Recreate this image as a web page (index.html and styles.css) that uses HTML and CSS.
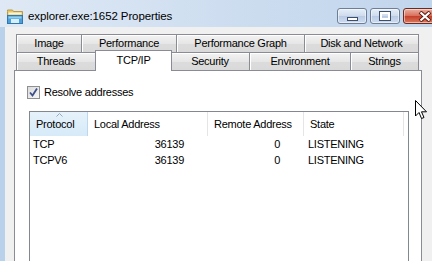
FILE: index.html
```html
<!DOCTYPE html>
<html lang="en">
<head>
    <meta charset="UTF-8">
    <title>explorer.exe:1652 Properties</title>
    <link rel="stylesheet" href="styles.css">
</head>
<body>
    <div class="window">
        <div class="titlebar">
            <svg class="app-icon" width="16" height="15" viewBox="0 0 16 15">
                <path d="M0.5 2.5 L0.5 1 L5.5 1 L6.5 2.5 L15.5 2.5 L15.5 14.5 L0.5 14.5 Z" fill="#e7c76c" stroke="#b99a42"/>
                <rect x="1.5" y="3.5" width="13" height="2" fill="#fff4c8"/>
                <rect x="0.5" y="6.5" width="15" height="8" fill="#4f9fd6" stroke="#2f77b0"/>
                <rect x="1.5" y="7.5" width="13" height="2" fill="#8fd0f0"/>
                <rect x="4" y="10" width="8" height="4" fill="#d8eef9"/>
            </svg>
            <span class="title">explorer.exe:1652 Properties</span>
            <div class="caption-buttons">
                <div class="cap-btn min"><span class="min-glyph"></span></div>
                <div class="cap-btn max"><span class="max-glyph"></span></div>
                <div class="cap-btn close">
                    <svg width="14" height="11" viewBox="0 0 14 11">
                        <path d="M2 1 L12 10 M12 1 L2 10" stroke="#5a1a10" stroke-width="4"/>
                        <path d="M2.5 1.5 L11.5 9.5 M11.5 1.5 L2.5 9.5" stroke="#fff" stroke-width="2.2"/>
                    </svg>
                </div>
            </div>
        </div>
        <div class="frame">
            <div class="client">
                <div class="tabs">
                    <div class="tab-row row-back">
                        <div class="tab">Image</div>
                        <div class="tab">Performance</div>
                        <div class="tab">Performance Graph</div>
                        <div class="tab">Disk and Network</div>
                    </div>
                    <div class="tab-row row-front">
                        <div class="tab">Threads</div>
                        <div class="tab selected">TCP/IP</div>
                        <div class="tab">Security</div>
                        <div class="tab">Environment</div>
                        <div class="tab">Strings</div>
                    </div>
                </div>
                <div class="panel">
                    <label class="check">
                        <span class="box">
                            <svg width="11" height="11" viewBox="0 0 11 11">
                                <path d="M2 5.5 L4.5 8.5 L9 1.5" fill="none" stroke="#3b4f8a" stroke-width="1.8"/>
                            </svg>
                        </span>
                        Resolve addresses
                    </label>
                    <div class="listview">
                        <div class="lv-header">
                            <div class="col c-proto sorted">
                                <svg class="sort-arrow" width="7" height="4" viewBox="0 0 7 4">
                                    <path d="M0.5 3.5 L3.5 0.5 L6.5 3.5" fill="none" stroke="#97a9bb"/>
                                </svg>
                                Protocol
                            </div>
                            <div class="col c-local">Local Address</div>
                            <div class="col c-remote">Remote Address</div>
                            <div class="col c-state">State</div>
                        </div>
                        <div class="lv-row">
                            <div class="cell c-proto">TCP</div>
                            <div class="cell c-local num">36139</div>
                            <div class="cell c-remote num">0</div>
                            <div class="cell c-state">LISTENING</div>
                        </div>
                        <div class="lv-row">
                            <div class="cell c-proto">TCPV6</div>
                            <div class="cell c-local num">36139</div>
                            <div class="cell c-remote num">0</div>
                            <div class="cell c-state">LISTENING</div>
                        </div>
                    </div>
                </div>
            </div>
        </div>
        <svg class="cursor" width="13" height="20" viewBox="0 0 13 20">
            <path d="M0.5 0.5 L0.5 16 L4 12.5 L6.5 18.5 L9 17.5 L6.5 11.8 L11.5 11.8 Z" fill="#fff" stroke="#000" stroke-linejoin="round"/>
        </svg>
    </div>
</body>
</html>
```

FILE: styles.css
```css
body {
    margin: 0;
    font-family: "Liberation Sans", Arial, sans-serif;
    font-size: 11px;
    letter-spacing: -0.25px;
    color: #000;
    overflow: hidden;
}
.window {
    position: relative;
    width: 432px;
    height: 261px;
    overflow: hidden;
    display: flex;
    flex-direction: column;
    background: #b9d1ea;
}
.titlebar {
    flex-shrink: 0;
    height: 19px;
    padding: 8px 0 0 7px;
    display: flex;
    align-items: flex-start;
    background: linear-gradient(to right, #dfe9f5, #cbdcef 60%, #c1d5ec);
}
.app-icon {
    margin-top: 1px;
    margin-right: 5px;
}
.title {
    font-size: 11.5px;
    letter-spacing: -0.1px;
    line-height: 16px;
}
.caption-buttons {
    margin-left: auto;
    margin-right: -14px;
    display: flex;
    gap: 3px;
}
.cap-btn {
    width: 28px;
    height: 14px;
    border: 1px solid #6d7e96;
    border-radius: 3px;
    display: flex;
    align-items: center;
    justify-content: center;
    background: linear-gradient(#e6eef8 0%, #cfdcee 48%, #b9cbe4 52%, #cfdcef 100%);
    box-shadow: inset 0 0 0 1px rgba(255, 255, 255, 0.5);
}
.cap-btn.close {
    width: 41px;
    border-color: #6e2a1f;
    background: linear-gradient(#eab0a2 0%, #d8705c 48%, #c6402a 52%, #d8785e 100%);
}
.min-glyph {
    width: 9px;
    height: 2px;
    margin-top: 6px;
    background: #fff;
    border: 1px solid #3d4f6a;
}
.max-glyph {
    width: 6px;
    height: 4px;
    border: 2px solid #fff;
    outline: 1px solid #3d4f6a;
}
.frame {
    flex: 1;
    min-height: 0;
    padding-left: 5px;
    display: flex;
}
.client {
    flex: 1;
    background: #f0f0f0;
    padding: 7px 0 0 9px;
}
.tabs {
    margin-left: 2px;
    width: 403px;
}
.tab-row {
    display: grid;
    height: 18px;
}
.row-back {
    grid-template-columns: 65px 95px 128px 115px;
}
.row-front {
    grid-template-columns: 79px 76px 78px 101px 69px;
}
.tab {
    border: 1px solid #898c95;
    border-right: none;
    border-bottom: none;
    background: linear-gradient(#f3f3f3, #e6e6e6 50%, #dcdcdc 51%, #d9d9d9);
    text-align: center;
    line-height: 17px;
    box-shadow: inset 1px 1px 0 #fff;
}
.tab:last-child {
    border-right: 1px solid #898c95;
}
.tab.selected {
    position: relative;
    z-index: 1;
    margin-top: -2px;
    margin-bottom: -1px;
    margin-right: -1px;
    border-right: 1px solid #898c95;
    background: #fff;
    box-shadow: none;
    line-height: 18px;
}
.tab.selected + .tab {
    border-left: none;
}
.panel {
    width: 406px;
    height: 200px;
    border: 1px solid #898c95;
    background: #fff;
    padding-top: 15px;
}
.check {
    display: flex;
    align-items: center;
    margin-left: 12px;
    gap: 4px;
    line-height: 13px;
}
.box {
    width: 11px;
    height: 11px;
    border: 1px solid #8e8f8f;
    background: linear-gradient(135deg, #dcdcdc, #f6f6f6);
    display: flex;
}
.listview {
    margin: 12px 0 0 14px;
    width: 378px;
    height: 160px;
    border: 1px solid #828790;
}
.lv-header {
    display: flex;
    height: 24px;
}
.col {
    position: relative;
    line-height: 24px;
    padding-left: 6px;
    border-right: 1px solid #e5e5e5;
    box-sizing: border-box;
}
.col.sorted {
    background: linear-gradient(#e6f2fb, #d6eaf8);
    border-right: 1px solid #bcd8ee;
}
.sort-arrow {
    position: absolute;
    left: 26px;
    top: 1px;
}
.c-proto {
    width: 58px;
}
.c-local {
    width: 120px;
}
.c-remote {
    width: 96px;
}
.c-state {
    width: 100px;
}
.lv-row {
    display: flex;
    height: 16px;
    line-height: 16px;
}
.cell {
    box-sizing: border-box;
    padding-left: 3px;
}
.cell.c-state {
    padding-left: 4px;
}
.cell.num {
    text-align: right;
    padding-right: 24px;
}
.cursor {
    position: absolute;
    left: 415px;
    top: 100px;
}
```
